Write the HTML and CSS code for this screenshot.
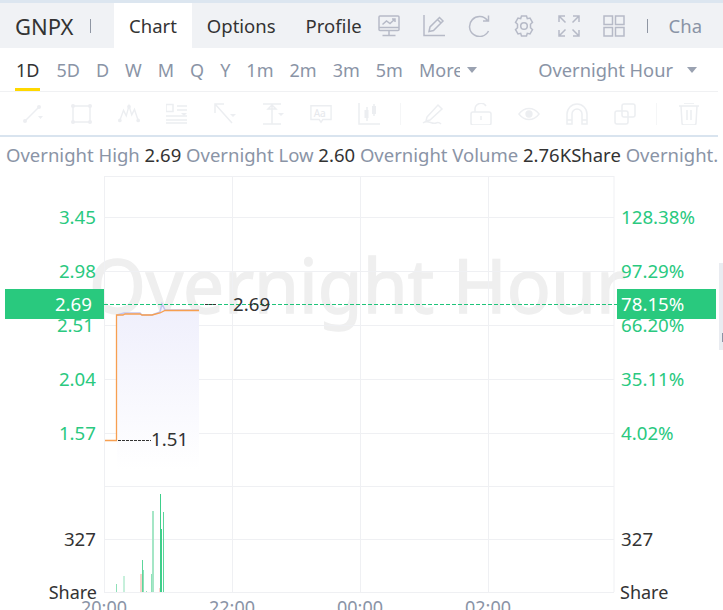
FILE: index.html
```html
<!DOCTYPE html>
<html lang="en">
<head>
<meta charset="utf-8">
<title>GNPX Chart</title>
<link rel="stylesheet" href="styles.css">
</head>
<body>
<div class="page">
  <header class="tabbar">
    <div class="symbol">GNPX</div>
    <span class="vsep"></span>
    <nav class="tabs">
      <a class="tab active">Chart</a>
      <a class="tab">Options</a>
      <a class="tab">Profile</a>
    </nav>
    <div class="tools">
      <svg class="ticon" viewBox="0 0 22 22"><rect x="1" y="1" width="20" height="14.500" rx="1"/><path d="M1 12.500h20M11 15.500v4.500M4.500 20.500h13M4.500 9.500l4-3.500 3.500 2.500 5-4.500M14 4h3v3"/></svg>
      <svg class="ticon" viewBox="0 0 22 22"><path d="M1 0v20.500h21M6 16.500l1-4.500L16.500 2.500l3.500 3.500-9.500 9.500zM14.500 4.500l3.500 3.500"/></svg>
      <svg class="ticon" viewBox="0 0 22 22"><path d="M19.500 5.500A10 10 0 1 0 20.500 16M20.500 0.500v5.500H15"/></svg>
      <svg class="ticon" viewBox="0 0 22 22"><path d="M8.500 1h5l.8 2.700 2.700-.7 2.500 4.300-2 2 0 3.400 2 2L17 19l-2.700-.7-.8 2.700h-5l-.8-2.700L5 19l-2.500-4.300 2-2v-3.400l-2-2L5 3l2.700.7z"/><circle cx="11" cy="11" r="3.300"/></svg>
      <svg class="ticon" viewBox="0 0 22 22"><path d="M1 7V1h6M1 1l6.500 6.500M15 1h6v6M21 1l-6.500 6.500M1 15v6h6M1 21l6.500-6.500M15 21h6v-6M21 21l-6.500-6.500"/></svg>
      <svg class="ticon" viewBox="0 0 22 22"><rect x="1" y="1" width="8.500" height="8.500"/><rect x="12.500" y="1" width="8.500" height="8.500"/><rect x="1" y="12.500" width="8.500" height="8.500"/><rect x="12.500" y="12.500" width="8.500" height="8.500"/></svg>
    </div>
    <span class="vsep second"></span>
    <div class="clip-tab">Chart</div>
  </header>

  <div class="periods">
    <div class="period-list">
      <a class="period current">1D</a>
      <a class="period">5D</a>
      <a class="period">D</a>
      <a class="period">W</a>
      <a class="period">M</a>
      <a class="period">Q</a>
      <a class="period">Y</a>
      <a class="period">1m</a>
      <a class="period">2m</a>
      <a class="period">3m</a>
      <a class="period">5m</a>
      <a class="period more"><span class="more-label">More</span><i class="caret"></i></a>
    </div>
    <a class="session">Overnight Hour<i class="caret"></i></a>
  </div>

  <div class="drawbar">
    <div class="group">
      <svg class="dicon" viewBox="0 0 22 22"><path d="M3 18L17 4"/><circle cx="3" cy="18" r="2" class="dot"/><circle cx="17" cy="4" r="2" class="dot"/><path d="M16 13h5l-2.500 3z" class="dot"/></svg>
      <svg class="dicon" viewBox="0 0 22 22"><rect x="3" y="3" width="17" height="16"/><circle cx="3" cy="3" r="2" class="dot"/><circle cx="20" cy="3" r="2" class="dot"/><circle cx="3" cy="19" r="2" class="dot"/><circle cx="20" cy="19" r="2" class="dot"/></svg>
      <svg class="dicon" viewBox="0 0 24 22"><path d="M2 18L6 7l3 6 3-11 3 10 3-6 4 12"/><circle cx="2" cy="18" r="2" class="dot"/><circle cx="12" cy="3" r="2" class="dot"/><circle cx="22" cy="18" r="2" class="dot"/></svg>
      <svg class="dicon" viewBox="0 0 22 22"><path d="M11 3h10M11 7h10M0 13h21M0 17h21M0 20h21M0 1.500h7v7H0z"/><path d="M15 10h6l-3 3z" class="dot"/></svg>
      <svg class="dicon" viewBox="0 0 22 22"><path d="M1 10V1h9M1 1l17 19"/><path d="M16 11h6l-3 3z" class="dot"/></svg>
      <svg class="dicon" viewBox="0 0 22 22"><path d="M1 1h18M1 21h18M10 1v20M6 6l4-4 4 4z"/><path d="M16 10h6l-3 3z" class="dot"/></svg>
      <svg class="dicon" viewBox="0 0 24 22"><path d="M1 2h22v15H14l-2 3-2-3H1z"/><text class="aa" x="4" y="14">Aa</text></svg>
      <svg class="dicon" viewBox="0 0 22 22"><path d="M1 0v21h21M9 4v14M16 1v12"/><rect x="6.500" y="7" width="4" height="8" class="dot"/><rect x="14" y="3" width="4" height="8" class="dot"/></svg>
    </div>
    <div class="group">
      <svg class="dicon" viewBox="0 0 22 22"><path d="M5 14L16 2l4 4L8 17l-4 1zM1 20c5-4 9 2 13 0 2-1 3-1 5 1"/></svg>
      <svg class="dicon" viewBox="0 0 22 22"><rect x="1" y="9" width="20" height="13" rx="2"/><path d="M5 9V6a6 6 0 0 1 11-3M11 13v4"/></svg>
      <svg class="dicon" viewBox="0 0 24 22"><path d="M1 11c6-8 16-8 22 0-6 8-16 8-22 0z"/><circle cx="12" cy="11" r="4" class="dot"/></svg>
      <svg class="dicon" viewBox="0 0 22 22"><path d="M1 21V11a10 10 0 0 1 20 0v10h-5V11a5 5 0 0 0-10 0v10zM1 17h5M16 17h5"/></svg>
      <svg class="dicon" viewBox="0 0 22 22"><rect x="8" y="1" width="13" height="13" rx="2"/><rect x="1" y="8" width="13" height="13" rx="2"/></svg>
    </div>
    <svg class="dicon" viewBox="0 0 20 22"><path d="M0 3h20M5 0h10M2 3l1 17a2 2 0 0 0 2 2h10a2 2 0 0 0 2-2l1-17M8 7v10M12 7v10"/></svg>
  </div>

  <div class="quote">
    <span class="q-label">Overnight High</span> <span class="q-val">2.69</span>
    <span class="q-label">Overnight Low</span> <span class="q-val">2.60</span>
    <span class="q-label">Overnight Volume</span> <span class="q-val">2.76KShare</span>
    <span class="q-label">Overnight.</span>
  </div>

  <svg class="chart" viewBox="0 176 723 434" width="723" height="434">
    <defs>
      <linearGradient id="area" x1="0" y1="0" x2="0" y2="1">
        <stop offset="0" stop-color="#efeffc"/>
        <stop offset="1" stop-color="#ffffff"/>
      </linearGradient>
    </defs>
    <text class="watermark" x="89" y="313" textLength="537" lengthAdjust="spacingAndGlyphs">Overnight Hour</text>
    <g class="grid">
      <path d="M104.500 176V592M232.500 176V592M360.500 176V592M488.500 176V592M614 176V592"/>
      <path d="M104 176.500H614M104 217.500H614M104 271.500H614M104 325.500H614M104 379.500H614M104 433.500H614M104 486.500H614M104 539.500H614M104 592.500H614"/>
    </g>
    <path class="area" d="M117 315L124 313H140L142 315H152L160 312L162 304L165 310H199V470H117Z"/>
    <path class="line-blue" d="M117 315L124 313H140L142 315H152L160 312L162 304L165 310H199"/>
    <path class="line-orange" d="M105 440.500H116.500V315H123L125 314H140L142 315H152L160 313L165 310.500H199"/>
    <path class="leader" d="M118 440.500H151"/>
    <path class="price-line" d="M104 304.500H617"/>
    <path class="leader" d="M205 304.500H217"/>
    <g class="bars">
      <path class="v-soft" d="M116.500 584V592M124 576V592M143.500 570V592M146.500 591V592"/>
      <path class="v-soft" d="M151.500 574V592"/>
      <path class="v-pale" d="M153 511V592"/>
      <path class="v-red" d="M141 574V592M160 588V592"/>
      <path class="v-mid" d="M142.500 560V592M163.500 512V592"/>
      <path class="v-strong" d="M160.500 494V592M161.500 529V592"/>
    </g>
    <g class="axis green">
      <text x="96" y="224">3.45</text>
      <text x="96" y="278">2.98</text>
      <text x="94" y="332">2.51</text>
      <text x="96" y="386">2.04</text>
      <text x="96" y="440">1.57</text>
    </g>
    <g class="axis-r green">
      <text x="621" y="224">128.38%</text>
      <text x="621" y="278">97.29%</text>
      <text x="621" y="332">66.20%</text>
      <text x="621" y="386">35.11%</text>
      <text x="621" y="440">4.02%</text>
    </g>
    <rect class="badge" x="5" y="289" width="99" height="30"/>
    <rect class="badge" x="617" y="289" width="99" height="30"/>
    <text class="badge-l" x="92" y="311">2.69</text>
    <text class="badge-r" x="621" y="311">78.15%</text>
    <text class="tag" x="233" y="311">2.69</text>
    <text class="tag" x="151" y="446">1.51</text>
    <g class="axis dark">
      <text x="96" y="546">327</text>
      <text class="unit" x="97" y="599">Share</text>
    </g>
    <g class="axis-r dark">
      <text x="621" y="546">327</text>
      <text class="unit" x="620" y="599">Share</text>
    </g>
    <g class="times">
      <text x="104" y="614">20:00</text>
      <text x="232" y="614">22:00</text>
      <text x="360" y="614">00:00</text>
      <text x="488" y="614">02:00</text>
    </g>
    <rect class="edge" x="719" y="263" width="4" height="87"/>
    <rect class="edge-mark" x="722" y="333" width="1" height="9"/>
  </svg>
</div>
</body>
</html>
```
FILE: styles.css
```css
* { box-sizing: border-box; }
html, body { margin: 0; padding: 0; background: #fff; }
body { width: 723px; height: 610px; overflow: hidden; font-family: "Noto Sans", "Open Sans", sans-serif; color: #333; }
.page { width: 723px; height: 610px; overflow: hidden; display: flex; flex-direction: column; }

.tabbar { height: 48px; flex: none; border-top: 3px solid #dce6f0; background: #f0f2f5; display: flex; align-items: center; }
.symbol { margin-left: 15px; font-size: 22px; color: #333; width: 60px; white-space: nowrap; }
.vsep { width: 1px; height: 14px; background: #8f96a3; margin-left: 15px; }
.tabs { display: flex; height: 45px; margin-left: 23px; }
.tab { display: flex; align-items: center; font-size: 18.500px; color: #333; padding: 0 15px; }
.tab.active { background: #fff; padding: 0 15px; }
.tools { display: flex; gap: 23px; margin-left: 1px; }
.ticon { width: 22px; height: 22px; fill: none; stroke: #b6bac7; stroke-width: 1.500; }
.vsep.second { margin-left: 22px; }
.clip-tab { margin-left: 21px; width: 34px; overflow: hidden; white-space: nowrap; font-size: 18.500px; color: #8a94a6; }

.periods { height: 44px; flex: none; border-bottom: 1px solid #f0f1f3; display: flex; align-items: stretch; justify-content: space-between; padding: 0 21px 0 16px; font-size: 18px; color: #8a94a6; margin-right: 5px; }
.period-list { display: flex; gap: 16px; }
.period { display: flex; align-items: center; height: 43px; }
.period.current { color: #333; border-bottom: 3px solid #ffd800; padding: 3px 1px 0; margin-left: -1px; }
.more { gap: 7px; }
.more-label { display: block; width: 41px; overflow: hidden; }
.caret { display: block; width: 0; height: 0; border-left: 5px solid transparent; border-right: 5px solid transparent; border-top: 6px solid #9aa2b1; }
.session { display: flex; align-items: center; gap: 14px; font-size: 18.300px; }

.drawbar { height: 45px; flex: none; margin-right: 5px; border-bottom: 2px solid #d9e4ef; display: flex; align-items: center; padding-left: 22px; }
.group { display: flex; gap: 26px; padding-right: 20px; margin-right: 21px; border-right: 1px solid #f5f6f7; }
.dicon { width: 22px; height: 22px; fill: none; stroke: #eceef1; stroke-width: 1.500; }
.dot { fill: #eceef1; stroke: none; }
.aa { font-size: 11px; fill: #e6e8ec; stroke: none; }

.quote { height: 39px; flex: none; padding-left: 6px; font-size: 18.500px; line-height: 36px; white-space: nowrap; overflow: hidden; }
.q-label { color: #8a94a6; }
.q-val { color: #333; }

.chart { display: block; flex: none; font-family: "Noto Sans", "Open Sans", sans-serif; font-size: 18.700px; }
.watermark { font-size: 74px; fill: #efefef; stroke: #efefef; stroke-width: 1.500; }
.grid path { fill: none; stroke: #eff0f3; stroke-width: 1; }
.area { fill: url(#area); }
.line-blue { fill: none; stroke: #c3c5f0; stroke-width: 1.500; }
.line-orange { fill: none; stroke: #f79f50; stroke-width: 1.300; }
.leader { fill: none; stroke: #333; stroke-width: 1; stroke-dasharray: 3 1; }
.price-line { fill: none; stroke: #1fc47a; stroke-width: 1; stroke-dasharray: 4 2; }
.bars path { fill: none; }
.v-soft { stroke: #8fe0b8; stroke-width: 1; }
.v-pale { stroke: #a5e6c6; stroke-width: 2; }
.v-red { stroke: #f0a898; stroke-width: 1; }
.v-mid { stroke: #5cd69b; stroke-width: 1; }
.v-strong { stroke: #3ecf8b; stroke-width: 1; }
.axis text { text-anchor: end; }
.green text { fill: #2ac97f; }
.dark text { fill: #333; }
.dark .unit { font-size: 18px; }
.badge { fill: #29c97e; }
.badge-l { fill: #fff; text-anchor: end; }
.badge-r { fill: #fff; }
.tag { fill: #333; }
.times text { fill: #8a94a6; text-anchor: middle; font-size: 18px; }
.edge { fill: #e9ecf1; }
.edge-mark { fill: #8a94a6; }
```
